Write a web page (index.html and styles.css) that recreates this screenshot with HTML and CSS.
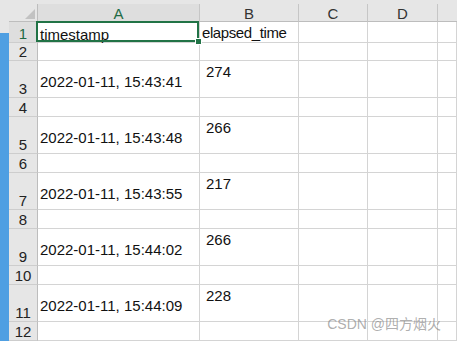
FILE: index.html
```html
<!DOCTYPE html>
<html>
<head>
	<meta charset="utf-8">
	<title>Sheet1</title>
	<link rel="stylesheet" href="styles.css">
</head>
<body>

<div class='sheet'>
	<div class='strip'></div>

	<div class='main'>
		<div class='band'></div>

		<div class='grid'>
			<!-- column headers -->
			<div class='corner'></div>
			<div class='colhead active'>A</div>
			<div class='colhead'>B</div>
			<div class='colhead'>C</div>
			<div class='colhead'>D</div>
			<div class='colhead last'></div>

			<div class='rowhead active'>1</div>
			<div class='cell a selected'>timestamp</div>
			<div class='cell b tight'>elapsed_time</div>
			<div class='cell'></div><div class='cell'></div><div class='cell'></div>

			<div class='rowhead'>2</div>
			<div class='cell'></div><div class='cell'></div><div class='cell'></div><div class='cell'></div><div class='cell'></div>

			<div class='rowhead'>3</div>
			<div class='cell a'>2022-01-11, 15:43:41</div>
			<div class='cell b num'>274</div>
			<div class='cell'></div><div class='cell'></div><div class='cell'></div>

			<div class='rowhead'>4</div>
			<div class='cell'></div><div class='cell'></div><div class='cell'></div><div class='cell'></div><div class='cell'></div>

			<div class='rowhead'>5</div>
			<div class='cell a'>2022-01-11, 15:43:48</div>
			<div class='cell b num'>266</div>
			<div class='cell'></div><div class='cell'></div><div class='cell'></div>

			<div class='rowhead'>6</div>
			<div class='cell'></div><div class='cell'></div><div class='cell'></div><div class='cell'></div><div class='cell'></div>

			<div class='rowhead'>7</div>
			<div class='cell a'>2022-01-11, 15:43:55</div>
			<div class='cell b num'>217</div>
			<div class='cell'></div><div class='cell'></div><div class='cell'></div>

			<div class='rowhead'>8</div>
			<div class='cell'></div><div class='cell'></div><div class='cell'></div><div class='cell'></div><div class='cell'></div>

			<div class='rowhead'>9</div>
			<div class='cell a'>2022-01-11, 15:44:02</div>
			<div class='cell b num'>266</div>
			<div class='cell'></div><div class='cell'></div><div class='cell'></div>

			<div class='rowhead'>10</div>
			<div class='cell'></div><div class='cell'></div><div class='cell'></div><div class='cell'></div><div class='cell'></div>

			<div class='rowhead'>11</div>
			<div class='cell a'>2022-01-11, 15:44:09</div>
			<div class='cell b num'>228</div>
			<div class='cell'></div><div class='cell'></div><div class='cell'></div>

			<div class='rowhead'>12</div>
			<div class='cell'></div><div class='cell'></div><div class='cell'></div><div class='cell'></div><div class='cell'></div>
		</div>
	</div>
</div>

<div class='watermark'>CSDN @四方烟火</div>

</body>
</html>
```

FILE: styles.css
```css
html, body {
	margin: 0;
	padding: 0;
	background: #fff;
	overflow: hidden;
}

body {
	font-family: 'Liberation Sans', 'Noto Sans CJK SC', sans-serif;
	font-size: 15px;
	line-height: 17px;
	color: #111;
}

.sheet {
	display: flex;
	height: 341px;
}

.strip {
	width: 9px;
	flex: none;
	background: linear-gradient(#e6e6e6 33px, #4f9fe2 33px);
}

.main {
	flex: 1;
	display: flex;
	flex-direction: column;
	min-width: 0;
}

.band {
	height: 5px;
	background: #e6e6e6;
}

.grid {
	display: grid;
	grid-template-columns: 29px 162px 99px 69px 70px 1fr;
	grid-template-rows: 18px 21px 18px 37px 19px 37px 19px 37px 19px 37px 19px 37px 19px;
}

.grid > div {
	box-sizing: border-box;
}

.corner {
	position: relative;
	background: #e6e6e6;
	border-right: 1px solid #bdbdbd;
	border-bottom: 1px solid #bdbdbd;
}

.corner::after {
	content: '';
	position: absolute;
	right: 2px;
	bottom: 2px;
	width: 10px;
	height: 10px;
	background: #c2c2c2;
	clip-path: polygon(100% 0, 100% 100%, 0 100%);
}

.colhead {
	background: #e6e6e6;
	border-right: 1px solid #c6c6c6;
	border-bottom: 1px solid #bdbdbd;
	display: flex;
	align-items: center;
	justify-content: center;
	color: #333;
	padding-top: 1px;
}

.colhead.last {
	border-right: none;
}

.colhead.active {
	background: #dedede;
	color: #1f6b45;
}

.rowhead {
	background: #e6e6e6;
	border-right: 1px solid #bdbdbd;
	border-bottom: 1px solid #cdcdcd;
	display: flex;
	align-items: flex-end;
	justify-content: center;
	line-height: 15px;
	padding-bottom: 1px;
	color: #222;
}

.rowhead.active {
	background: #dedede;
	color: #1f6b45;
}

.cell {
	border-right: 1px solid #d4d4d4;
	border-bottom: 1px solid #d4d4d4;
	padding-left: 2px;
	white-space: nowrap;
}

.cell.a {
	display: flex;
	align-items: center;
	padding-top: 5px;
}

.cell.b {
	padding-top: 2px;
}

.cell.num {
	padding-left: 6px;
}

.tight {
	letter-spacing: -0.4px;
}

.selected {
	position: relative;
}

.selected::after {
	content: '';
	position: absolute;
	left: -2px;
	top: -1px;
	right: 0;
	bottom: 0;
	border: 2px solid #217346;
	z-index: 2;
}

.selected::before {
	content: '';
	position: absolute;
	right: -3px;
	bottom: -3px;
	width: 5px;
	height: 5px;
	background: #217346;
	border: 1px solid #fff;
	z-index: 3;
}

.watermark {
	position: absolute;
	right: 16px;
	bottom: 8px;
	font-size: 14px;
	color: rgba(130, 130, 130, 0.65);
}
```
